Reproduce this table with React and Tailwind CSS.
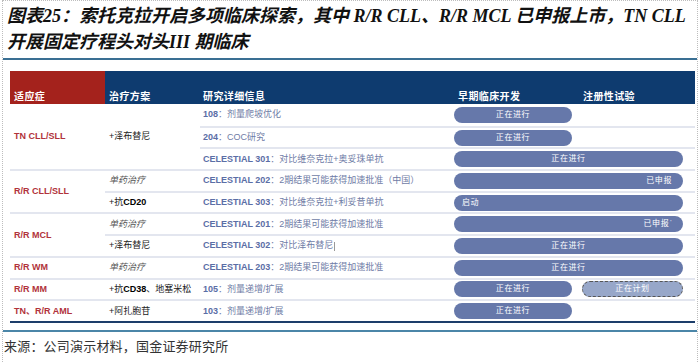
import React from "react";

const SANS = "font-['Liberation_Sans','Noto_Sans_CJK_SC',sans-serif]";
const BORDER = "border-t-2 border-[#e3e6ef]";

function Bar({ kind = "early", align = "center", children }) {
  const width =
    kind === "early" ? "w-[118px]" : kind === "long" ? "w-[229px]" : "w-[101px] ml-[10px]";
  const fill =
    kind === "plan"
      ? "bg-[#97a7c9] border border-dashed border-[#555]"
      : "bg-[#6678aa]";
  const just =
    align === "left"
      ? "justify-start pl-[8px]"
      : align === "right"
      ? "justify-end pr-[11px]"
      : "justify-center";
  return (
    <div
      className={`h-[16px] rounded-full flex items-center ${width} ${fill} ${just} text-white text-[8px] leading-none tracking-[0.6px] ${SANS}`}
    >
      {children}
    </div>
  );
}

function Study({ code, rest, cursor }) {
  return (
    <span className={`text-[9px] leading-none ${SANS} text-[#5b6ea6] whitespace-nowrap`}>
      <span className="font-bold">{code}</span>
      <span className="text-[#6f7ca6]">{rest}</span>
      {cursor && <span className="inline-block w-px h-[9px] bg-[#999] align-middle ml-px" />}
    </span>
  );
}

function Ind({ children }) {
  return (
    <span className={`text-[9px] leading-none font-bold text-[#b1323b] ${SANS} whitespace-nowrap`}>
      {children}
    </span>
  );
}

function Trt({ children, gray }) {
  return (
    <span
      className={`text-[9px] leading-none ${SANS} whitespace-nowrap ${
        gray ? "text-[#555] italic" : "text-[#222]"
      }`}
    >
      {children}
    </span>
  );
}

export default function App() {
  return (
    <div className="w-[700px] h-[362px] bg-white overflow-hidden">
      <div className="ml-[2px] w-[696px] h-[362px] border-t border-l border-r border-dotted border-[#bdbdbd] flex flex-col">
        <div
          className={`pt-[2px] pl-[4px] text-[18px] leading-[26px] font-bold italic text-[#111] font-['Liberation_Serif','Noto_Sans_CJK_SC',serif]`}
        >
          <div className="whitespace-nowrap">
            图表25：索托克拉开启多项临床探索，其中 R/R CLL、R/R MCL 已申报上市，TN CLL
          </div>
          <div className="whitespace-nowrap">开展固定疗程头对头III 期临床</div>
        </div>
        <div className="mt-[3px] h-[2px] bg-[#3a6f93]" />

        <div className="mt-[11px] ml-[7px] w-[685px] border-b-2 border-[#1d3e6a]">
          {/* header */}
          <div className={`h-[33px] flex text-white font-bold text-[10px] leading-none tracking-[0.4px] ${SANS}`}>
            <div className="w-[95px] bg-[#a4221c] flex items-end pl-[4px] pb-[2px]">适应症</div>
            <div className="flex-1 bg-[#0e3b6f] flex items-end pb-[2px]">
              <div className="w-[95px] pl-[4px]">治疗方案</div>
              <div className="w-[254px] pl-[3px]">研究详细信息</div>
              <div className="w-[129px] pl-[4px]">早期临床开发</div>
              <div>注册性试验</div>
            </div>
          </div>

          {/* body */}
          <div className="grid grid-cols-[95px_95px_254px_241px] grid-rows-[repeat(10,21.7px)]">
            {/* indications */}
            <div className="col-start-1 row-start-1 row-span-3 flex items-center pl-[4px]"><Ind>TN CLL/SLL</Ind></div>
            <div className={`col-start-1 row-start-4 row-span-2 flex items-center pl-[4px] ${BORDER}`}><Ind>R/R CLL/SLL</Ind></div>
            <div className={`col-start-1 row-start-6 row-span-2 flex items-center pl-[4px] ${BORDER}`}><Ind>R/R MCL</Ind></div>
            <div className={`col-start-1 row-start-8 flex items-center pl-[4px] ${BORDER}`}><Ind>R/R WM</Ind></div>
            <div className={`col-start-1 row-start-9 flex items-center pl-[4px] ${BORDER}`}><Ind>R/R MM</Ind></div>
            <div className={`col-start-1 row-start-10 flex items-center pl-[4px] ${BORDER}`}><Ind>TN、R/R AML</Ind></div>

            {/* treatments */}
            <div className="col-start-2 row-start-1 row-span-3 flex items-center pl-[4px]"><Trt>+泽布替尼</Trt></div>
            <div className={`col-start-2 row-start-4 flex items-center pl-[4px] ${BORDER}`}><Trt gray>单药治疗</Trt></div>
            <div className={`col-start-2 row-start-5 flex items-center pl-[4px] ${BORDER}`}><Trt>+抗<span className="font-bold text-black">CD20</span></Trt></div>
            <div className={`col-start-2 row-start-6 flex items-center pl-[4px] ${BORDER}`}><Trt gray>单药治疗</Trt></div>
            <div className={`col-start-2 row-start-7 flex items-center pl-[4px] ${BORDER}`}><Trt>+泽布替尼</Trt></div>
            <div className={`col-start-2 row-start-8 flex items-center pl-[4px] ${BORDER}`}><Trt gray>单药治疗</Trt></div>
            <div className={`col-start-2 row-start-9 flex items-center pl-[4px] ${BORDER}`}><Trt>+抗<span className="font-bold text-black">CD38</span>、地塞米松</Trt></div>
            <div className={`col-start-2 row-start-10 flex items-center pl-[4px] ${BORDER}`}><Trt>+阿扎胞苷</Trt></div>

            {/* studies */}
            <div className="col-start-3 row-start-1 flex items-center pl-[3px]"><Study code="108" rest="：剂量爬坡优化" /></div>
            <div className={`col-start-3 row-start-2 flex items-center pl-[3px] ${BORDER}`}><Study code="204" rest="：COC研究" /></div>
            <div className={`col-start-3 row-start-3 flex items-center pl-[3px] ${BORDER}`}><Study code="CELESTIAL 301" rest="：对比维奈克拉+奥妥珠单抗" /></div>
            <div className={`col-start-3 row-start-4 flex items-center pl-[3px] ${BORDER}`}><Study code="CELESTIAL 202" rest="：2期结果可能获得加速批准（中国）" /></div>
            <div className={`col-start-3 row-start-5 flex items-center pl-[3px] ${BORDER}`}><Study code="CELESTIAL 303" rest="：对比维奈克拉+利妥昔单抗" /></div>
            <div className={`col-start-3 row-start-6 flex items-center pl-[3px] ${BORDER}`}><Study code="CELESTIAL 201" rest="：2期结果可能获得加速批准" /></div>
            <div className={`col-start-3 row-start-7 flex items-center pl-[3px] ${BORDER}`}><Study code="CELESTIAL 302" rest="：对比泽布替尼" cursor /></div>
            <div className={`col-start-3 row-start-8 flex items-center pl-[3px] ${BORDER}`}><Study code="CELESTIAL 203" rest="：2期结果可能获得加速批准" /></div>
            <div className={`col-start-3 row-start-9 flex items-center pl-[3px] ${BORDER}`}><Study code="105" rest="：剂量递增/扩展" /></div>
            <div className={`col-start-3 row-start-10 flex items-center pl-[3px] ${BORDER}`}><Study code="103" rest="：剂量递增/扩展" /></div>

            {/* timelines */}
            <div className="col-start-4 row-start-1 flex items-center"><Bar>正在进行</Bar></div>
            <div className={`col-start-4 row-start-2 flex items-center ${BORDER}`}><Bar>正在进行</Bar></div>
            <div className={`col-start-4 row-start-3 flex items-center ${BORDER}`}><Bar kind="long">正在进行</Bar></div>
            <div className={`col-start-4 row-start-4 flex items-center ${BORDER}`}><Bar kind="long" align="right">已申报</Bar></div>
            <div className={`col-start-4 row-start-5 flex items-center ${BORDER}`}><Bar kind="long" align="left">启动</Bar></div>
            <div className={`col-start-4 row-start-6 flex items-center ${BORDER}`}><Bar kind="long" align="right">已申报<span className="text-[6px] -mt-[4px] ml-px">'</span></Bar></div>
            <div className={`col-start-4 row-start-7 flex items-center ${BORDER}`}><Bar kind="long">正在进行</Bar></div>
            <div className={`col-start-4 row-start-8 flex items-center ${BORDER}`}><Bar kind="long">正在进行</Bar></div>
            <div className={`col-start-4 row-start-9 flex items-center ${BORDER}`}><Bar>正在进行</Bar><Bar kind="plan">正在计划</Bar></div>
            <div className={`col-start-4 row-start-10 flex items-center ${BORDER}`}><Bar>正在进行</Bar></div>
          </div>
        </div>

        <div className="mt-[7px] h-[2px] bg-[#4b86a8]" />
        <div className={`mt-[7px] pl-[1px] text-[13px] leading-[16px] text-[#333] tracking-[0.2px] ${SANS}`}>
          来源：公司演示材料，国金证券研究所
        </div>
      </div>
    </div>
  );
}
